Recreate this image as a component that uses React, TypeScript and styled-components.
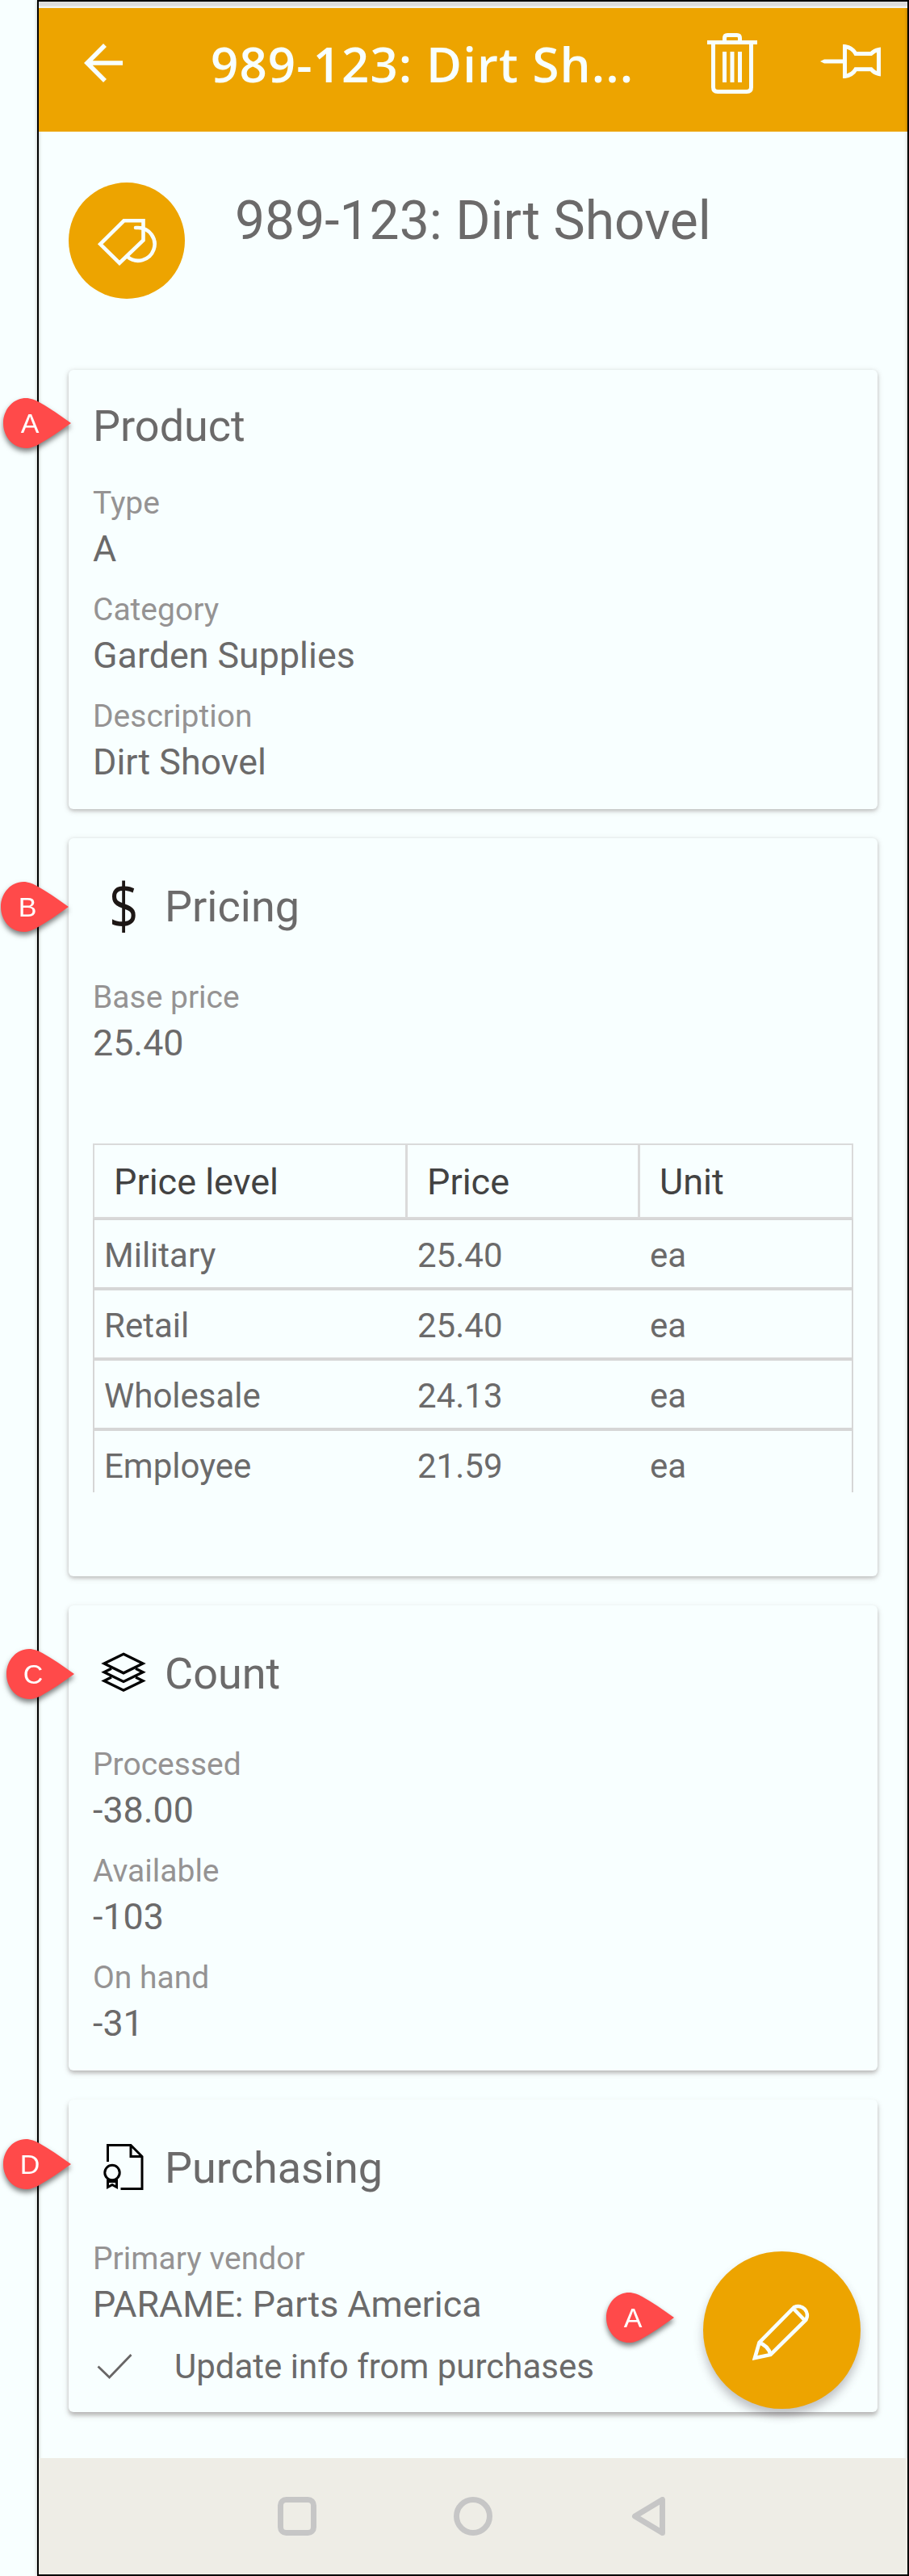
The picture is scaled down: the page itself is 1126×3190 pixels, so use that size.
import React from "react";
import styled, { createGlobalStyle } from "styled-components";

const color = {
  page: "#f8ffff",
  accent: "#eda400",
  text: "#6b6a6a",
  label: "#959393",
  heading: "#424242",
  line: "#dadada",
  pin: "#ff4a4a",
};

const GlobalStyle = createGlobalStyle`
  * { box-sizing: border-box; }
  body { margin: 0; background: ${color.page}; font-family: Roboto, "Liberation Sans", sans-serif; }
`;

const Page = styled.div`
  position: relative;
  width: 1126px;
  height: 3190px;
  padding-left: 46px;
  overflow: hidden;
`;

const Phone = styled.main`
  display: flex;
  flex-direction: column;
  height: 3190px;
  border: 2px solid #000;
  background: ${color.page};
  box-shadow: 0 0 4px rgba(90, 70, 50, 0.35), inset 0 0 4px rgba(90, 70, 50, 0.35);
`;

const StatusStrip = styled.div`
  flex: none;
  height: 8px;
  background: linear-gradient(#dcdcdc 0 5px, #f0f2f2 6px);
`;

const AppBar = styled.header`
  flex: none;
  display: flex;
  align-items: flex-start;
  height: 153px;
  padding: 31px 33px 0 56px;
  background: ${color.accent};
  color: ${color.page};
  box-shadow: inset -3px 0 3px -2px rgba(90, 50, 0, 0.35);
`;

const BarIcon = styled.div<{ $top: number; $left: number }>`
  flex: none;
  display: flex;
  margin-top: ${(p) => p.$top}px;
  margin-left: ${(p) => p.$left}px;
`;

const BarTitle = styled.h1`
  flex: none;
  width: 524px;
  margin: 0 0 0 109px;
  font: 600 60px/76px "Open Sans", "Noto Sans", sans-serif;
  letter-spacing: 1.1px;
  white-space: nowrap;
`;

const Hero = styled.section`
  flex: none;
  display: flex;
  height: 295px;
  padding: 63px 37px 0;
`;

const Avatar = styled.div`
  display: flex;
  flex: none;
  width: 144px;
  height: 144px;
  padding: 43px 0 0 35px;
  border-radius: 50%;
  background: ${color.accent};
`;

const HeroTitle = styled.h2`
  margin: 8px 0 0 62px;
  font-size: 66px;
  font-weight: 400;
  line-height: 80px;
  color: ${color.text};
  white-space: nowrap;
`;

const CardList = styled.div`
  flex: 1;
  display: flex;
  flex-direction: column;
  gap: 36px;
  padding: 0 37px;
`;

const Card = styled.section<{ $bottom: number; $depth: number }>`
  flex: none;
  padding: 39px 30px ${(p) => p.$bottom}px;
  border-radius: 6px;
  box-shadow: 0 ${(p) => p.$depth}px 5px rgba(60, 50, 50, 0.28), 0 ${(p) => p.$depth}px 9px rgba(110, 80, 70, 0.13);
  background: ${color.page};
`;

const CardTitle = styled.h3`
  margin: 0 0 37px;
  font-size: 54px;
  font-weight: 400;
  line-height: 62px;
  color: ${color.text};
`;

const IconHeading = styled.div`
  display: flex;
  align-items: center;
  height: 92px;
  margin-bottom: 39px;
  ${CardTitle} { margin: 0; }
`;

const HeadingIcon = styled.div`
  display: flex;
  align-items: center;
  justify-content: center;
  width: 76px;
  height: 92px;
  margin-right: 13px;
  padding-bottom: 4px;
`;

const DollarSign = styled.span`
  font: 400 78px/88px "Open Sans", "Noto Sans", sans-serif;
  color: #1d1715;
  transform: scaleX(0.82);
`;

const Field = styled.div`
  height: 132px;
  white-space: nowrap;
`;

const Label = styled.div`
  font-size: 39px;
  line-height: 54px;
  color: ${color.label};
`;

const Value = styled.div`
  font-size: 44.8px;
  line-height: 60px;
  color: ${color.text};
`;

const TableClip = styled.div`
  height: 432px;
  margin-top: 76px;
  overflow: hidden;
`;

const HeadRow = styled.div`
  display: grid;
  grid-template-columns: 388px 288px 262px;
  height: 93px;
  border: 2px solid ${color.line};
`;

const HeadCell = styled.div`
  padding-left: 24px;
  border-right: 3px solid ${color.line};
  font-size: 45px;
  line-height: 91px;
  color: ${color.heading};
  &:last-child { border-right: 0; }
`;

const BodyRow = styled.div`
  display: grid;
  grid-template-columns: 388px 288px 262px;
  height: 87px;
  border: 2px solid #d6d6d6;
`;

const BodyCell = styled.div`
  padding-left: 12px;
  font-size: 42px;
  line-height: 87px;
  color: ${color.text};
`;

const CheckRow = styled.div`
  display: flex;
  align-items: center;
  height: 58px;
  padding-left: 5px;
  font-size: 42px;
  line-height: 58px;
  color: ${color.text};
  white-space: nowrap;
  svg { margin-right: 52px; }
`;

const NavBar = styled.nav`
  flex: none;
  display: flex;
  align-items: center;
  height: 144px;
  padding-left: 296px;
  background: #eeede6;
  svg { margin-right: 170px; }
`;

const Fab = styled.button`
  position: absolute;
  left: 871px;
  top: 2788px;
  display: flex;
  align-items: center;
  justify-content: center;
  width: 195px;
  height: 195px;
  padding: 0;
  border: 0;
  border-radius: 50%;
  background: ${color.accent};
  box-shadow: 0 8px 12px rgba(60, 50, 60, 0.3);
`;

const PinBox = styled.div<{ $x: number; $y: number }>`
  position: absolute;
  left: ${(p) => p.$x}px;
  top: ${(p) => p.$y}px;
  width: 84px;
  height: 62px;
  filter: drop-shadow(0 4px 3px rgba(0, 0, 0, 0.5));
  svg { display: block; }
`;

const PinLetter = styled.span`
  position: absolute;
  left: 0;
  top: 0;
  width: 66px;
  font: 400 34px/63px "Liberation Sans", sans-serif;
  text-align: center;
  color: #fff;
`;

const Pin = ({ x, y, letter }: { x: number; y: number; letter: string }) => (
  <PinBox $x={x} $y={y}>
    <svg width="84" height="62" viewBox="0 0 84 62">
      <path d="M28 0C34 0 40 2.4 44 4.8C57 12 70 21 84 31C70 41 57 50 44 57.2C40 59.6 34 62 28 62C12.5 62 0 48 0 31S12.5 0 28 0Z" fill={color.pin} />
    </svg>
    <PinLetter>{letter}</PinLetter>
  </PinBox>
);

const BackIcon = () => (
  <svg width="48" height="48" fill="none" stroke="currentColor" strokeWidth="5.6">
    <path d="M48 24H4M26 2L4 24L26 46" />
  </svg>
);

const TrashIcon = () => (
  <svg width="62" height="75" fill="none" stroke="currentColor" strokeWidth="5">
    <path d="M0 11.5H62M21.5 11V6Q21.5 2.5 25 2.5H37Q40.5 2.5 40.5 6V11M7.5 12V67Q7.5 72.5 13 72.5H49Q54.5 72.5 54.5 67V12M21.5 23V61M31 23V61M40.5 23V61" />
  </svg>
);

const PushPinIcon = () => (
  <svg width="75" height="42" fill="none" stroke="currentColor" strokeWidth="5">
    <path d="M30.5 2.5V39.5Q40 38 44 30.7H63Q67 35.5 72.5 36.5V6.5Q67 7.5 63 11.5H44Q40 4 30.5 2.5Z" />
    <path d="M0 21L5 18.5H29V23.5H5Z" fill="currentColor" stroke="none" />
  </svg>
);

const TagIcon = () => (
  <svg width="74" height="60" fill="none" stroke={color.page} strokeWidth="4.6">
    <path d="M33.5 4.3H57.5V28.5L28 56.7L4.2 33.3Z" />
    <path d="M48 13H51A20.4 20.4 0 1 1 38 49" strokeLinecap="round" />
  </svg>
);

const LayersIcon = () => (
  <svg width="56" height="50" fill="none" stroke="#000" strokeWidth="3.3">
    <path d="M28 2.3L52 14L28 25.8L4 14Z" />
    <path d="M13 20.3L4 24.7L28 36.5L52 24.7L43 20.3M13 31L4 35.4L28 47.2L52 35.4L43 31" />
  </svg>
);

const CertificateIcon = () => (
  <svg width="50" height="57" fill="none" stroke="#000" strokeWidth="3">
    <path d="M5.5 22V1.5H34L48 15.5V55.5H21.5M34 1.5V15.5H48" />
    <circle cx="11" cy="35.5" r="9.2" />
    <path d="M5.5 43.5V53.5L11 50.5L16.5 53.5V43.5M5.5 46.5H16.5" />
  </svg>
);

const CheckIcon = () => (
  <svg width="44" height="32" fill="none" stroke="#686666" strokeWidth="2.8">
    <path d="M1.5 15.5L15.5 29L42.5 1" />
  </svg>
);

const PencilIcon = () => (
  <svg width="74" height="74" fill="none" stroke={color.page} strokeWidth="4.6">
    <path d="M3 71L8.5 52L52 8A11.2 11.2 0 0 1 66.5 23.5L22.5 67ZM50.5 9.5L65 24.5M8.5 52Q20 56 22.5 67" />
  </svg>
);

const FieldView = ({ label, value }: { label: string; value: string }) => (
  <Field>
    <Label>{label}</Label>
    <Value>{value}</Value>
  </Field>
);

const priceLevels = [
  ["Military", "25.40", "ea"],
  ["Retail", "25.40", "ea"],
  ["Wholesale", "24.13", "ea"],
  ["Employee", "21.59", "ea"],
];

export default function App() {
  return (
    <>
      <GlobalStyle />
      <Page>
        <Phone>
          <StatusStrip />
          <AppBar>
            <BarIcon $top={13} $left={0}><BackIcon /></BarIcon>
            <BarTitle>989-123: Dirt Sh...</BarTitle>
            <BarIcon $top={0} $left={91}><TrashIcon /></BarIcon>
            <BarIcon $top={14} $left={78}><PushPinIcon /></BarIcon>
          </AppBar>
          <Hero>
            <Avatar><TagIcon /></Avatar>
            <HeroTitle>989-123: Dirt Shovel</HeroTitle>
          </Hero>
          <CardList>
            <Card $bottom={10} $depth={2}>
              <CardTitle>Product</CardTitle>
              <FieldView label="Type" value="A" />
              <FieldView label="Category" value="Garden Supplies" />
              <FieldView label="Description" value="Dirt Shovel" />
            </Card>
            <Card $bottom={104} $depth={2}>
              <IconHeading>
                <HeadingIcon><DollarSign>$</DollarSign></HeadingIcon>
                <CardTitle>Pricing</CardTitle>
              </IconHeading>
              <FieldView label="Base price" value="25.40" />
              <TableClip>
                <HeadRow>
                  <HeadCell>Price level</HeadCell>
                  <HeadCell>Price</HeadCell>
                  <HeadCell>Unit</HeadCell>
                </HeadRow>
                {priceLevels.map((row) => (
                  <BodyRow key={row[0]}>
                    {row.map((cell, i) => <BodyCell key={i}>{cell}</BodyCell>)}
                  </BodyRow>
                ))}
              </TableClip>
            </Card>
            <Card $bottom={10} $depth={3}>
              <IconHeading>
                <HeadingIcon><LayersIcon /></HeadingIcon>
                <CardTitle>Count</CardTitle>
              </IconHeading>
              <FieldView label="Processed" value="-38.00" />
              <FieldView label="Available" value="-103" />
              <FieldView label="On hand" value="-31" />
            </Card>
            <Card $bottom={27} $depth={4}>
              <IconHeading>
                <HeadingIcon><CertificateIcon /></HeadingIcon>
                <CardTitle>Purchasing</CardTitle>
              </IconHeading>
              <FieldView label="Primary vendor" value="PARAME: Parts America" />
              <CheckRow><CheckIcon />Update info from purchases</CheckRow>
            </Card>
          </CardList>
          <NavBar>
            <svg width="48" height="48" fill="none" stroke="#c6c6c6" strokeWidth="7">
              <rect x="3.5" y="3.5" width="41" height="41" rx="7" />
            </svg>
            <svg width="48" height="48" fill="none" stroke="#c6c6c6" strokeWidth="7">
              <circle cx="24" cy="24" r="20.5" />
            </svg>
            <svg width="48" height="48" fill="none" stroke="#c6c6c6" strokeWidth="7" strokeLinejoin="round">
              <path d="M40.5 3.5V44.5L6.5 24Z" />
            </svg>
          </NavBar>
        </Phone>
        <Fab aria-label="Edit"><PencilIcon /></Fab>
        <Pin x={4} y={493} letter="A" />
        <Pin x={1} y={1092} letter="B" />
        <Pin x={8} y={2042} letter="C" />
        <Pin x={4} y={2649} letter="D" />
        <Pin x={751} y={2839} letter="A" />
      </Page>
    </>
  );
}
